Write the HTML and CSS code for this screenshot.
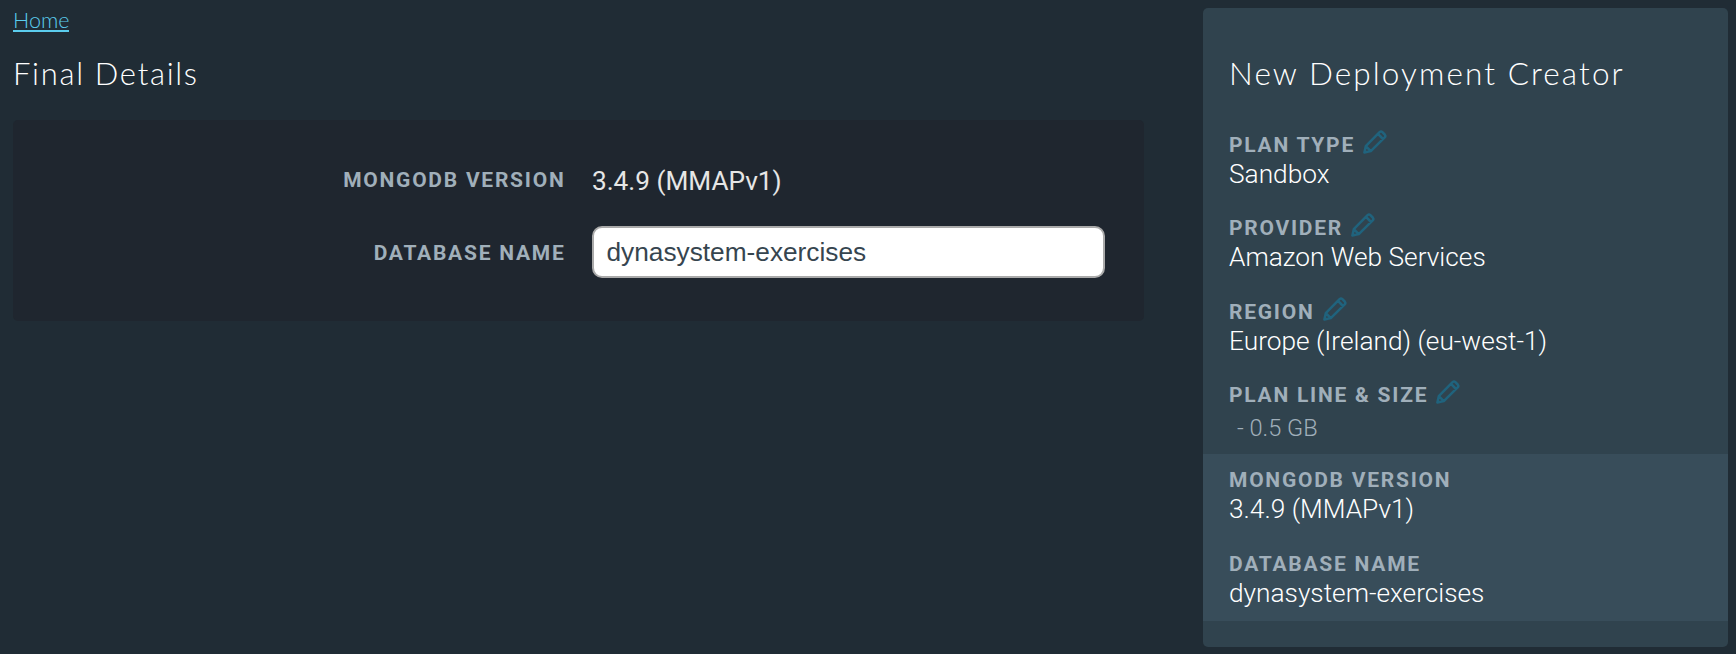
FILE: index.html
```html
<!DOCTYPE html>
<html lang="en">
<head>
<meta charset="utf-8">
<title>Final Details</title>
<link rel="stylesheet" href="styles.css">
</head>
<body>
<svg width="0" height="0" class="sprite" aria-hidden="true">
  <symbol id="pencil" viewBox="0 0 24 24">
    <path d="M1.4 22.5 L2.8 16.2 L16.6 2.2 Q18 .9 19.4 2.2 L21.7 4.5 Q23 5.9 21.7 7.3 L7.8 21.1 Z M15 3.9 L20 9 M2.8 16.2 L7.8 21.1"/>
  </symbol>
</svg>
<div class="page">
  <main class="main">
    <a class="home" href="#">Home</a>
    <h1 class="title">Final Details</h1>
    <section class="panel">
      <div class="row">
        <span class="label">MONGODB VERSION</span>
        <span class="version">3.4.9 (MMAPv1)</span>
      </div>
      <div class="row row-input">
        <label class="label" for="db">DATABASE NAME</label>
        <input class="field" id="db" type="text" value="dynasystem-exercises">
      </div>
    </section>
  </main>
  <aside class="summary">
    <h2 class="title title-side">New Deployment Creator</h2>
    <div class="item item-first"><div class="label">PLAN TYPE<svg class="pencil"><use href="#pencil"/></svg></div><div class="value">Sandbox</div></div>
    <div class="item"><div class="label">PROVIDER<svg class="pencil"><use href="#pencil"/></svg></div><div class="value">Amazon Web Services</div></div>
    <div class="item"><div class="label">REGION<svg class="pencil"><use href="#pencil"/></svg></div><div class="value">Europe (Ireland) (eu-west-1)</div></div>
    <div class="item item-size"><div class="label">PLAN LINE &amp; SIZE<svg class="pencil"><use href="#pencil"/></svg></div><div class="value size">- 0.5 GB</div></div>
    <div class="current">
      <div class="item"><div class="label">MONGODB VERSION</div><div class="value">3.4.9 (MMAPv1)</div></div>
      <div class="item"><div class="label">DATABASE NAME</div><div class="value">dynasystem-exercises</div></div>
    </div>
  </aside>
</div>
</body>
</html>
```
FILE: styles.css
```css
* { box-sizing: border-box; }
body {
  margin: 0;
  height: 654px;
  overflow: hidden;
  background: #202c35;
  color: #fff;
  font-family: Roboto, sans-serif;
}
.sprite { display: block; }
.page {
  display: grid;
  grid-template-columns: 1131px 525px;
  justify-content: space-between;
  align-items: start;
  padding: 8px 8px 0 13px;
}
.home {
  display: block;
  width: max-content;
  height: 24px;
  border-bottom: 2px solid #5bcdee;
  color: #5bcdee;
  font: 300 21.5px/24px Lato, sans-serif;
  text-decoration: none;
}
.title {
  margin: 21px 0 27px;
  font: 300 31px/40px Lato, sans-serif;
  letter-spacing: 1.7px;
}
.panel {
  height: 201px;
  padding: 40px 39px 0 0;
  border-radius: 5px;
  background: #1f262f;
}
.row {
  display: grid;
  grid-template-columns: 552.5px 513px;
  justify-content: space-between;
  align-items: center;
  height: 40px;
}
.row .label { text-align: right; }
.row-input { height: 52px; margin-top: 26px; }
.row-input .label { padding-top: 2px; }
.label {
  color: #a0afba;
  font-size: 21px;
  font-weight: 700;
  line-height: 30px;
  letter-spacing: 1.75px;
}
.version { padding-top: 2px; color: #e6e6e6; font-size: 26.2px; }
.field {
  height: 52px;
  width: 513px;
  padding: 0 12.5px;
  border: 2px solid #aaa;
  border-radius: 10px;
  background: #fff;
  color: #36454f;
  font: 26.25px "Liberation Sans", Arial, sans-serif;
}
.summary {
  height: 639px;
  padding-top: 45px;
  border-radius: 5px;
  background: #30434e;
}
.title-side { margin: 0 26px 37px; font-size: 31.5px; letter-spacing: 2.1px; }
.item { height: 84px; padding: 0 26px; }
.item-first { height: 83px; }
.item .label { display: flex; }
.value { font-size: 26.25px; font-weight: 300; line-height: 30px; margin-top: -1px; }
.pencil {
  width: 24px;
  height: 24px;
  margin: 0 0 0 8px;
  fill: none;
  stroke: #20637d;
  stroke-width: 2.5;
  stroke-linejoin: round;
}
.size { margin-top: 3px; padding-left: 8px; color: #a0afba; font-size: 23.6px; }
.item-size { height: 74px; margin-top: -1px; }
.current { height: 167px; padding-top: 11px; background: #384d5a; }
```
